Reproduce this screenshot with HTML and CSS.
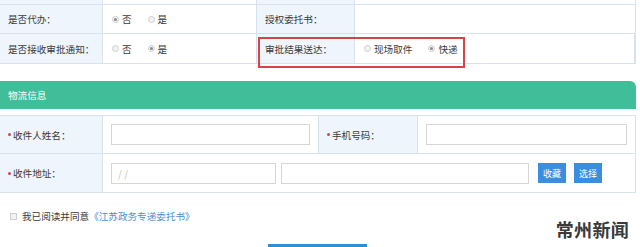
FILE: index.html
```html
<!DOCTYPE html>
<html lang="zh-CN">
<head>
    <meta charset="UTF-8">
    <title>物流信息</title>
    <link rel="stylesheet" href="styles.css">
</head>
<body>
    <div class="form-table top-table">
        <div class="row row-cut">
            <div class="cell label"></div>
            <div class="cell"></div>
            <div class="cell label"></div>
            <div class="cell"></div>
        </div>
        <div class="row">
            <div class="cell label">是否代办：</div>
            <div class="cell radios">
                <label><i class="radio on"></i>否</label>
                <label><i class="radio"></i>是</label>
            </div>
            <div class="cell label">授权委托书：</div>
            <div class="cell"></div>
        </div>
        <div class="row marked">
            <div class="cell label">是否接收审批通知：</div>
            <div class="cell radios">
                <label><i class="radio"></i>否</label>
                <label><i class="radio on"></i>是</label>
            </div>
            <div class="cell label">审批结果送达：</div>
            <div class="cell radios">
                <label><i class="radio"></i>现场取件</label>
                <label><i class="radio on"></i>快递</label>
            </div>
            <!-- 红框标注 -->
            <div class="mark-box"></div>
        </div>
    </div>

    <div class="section-title">物流信息</div>

    <div class="form-table ship-table">
        <div class="row">
            <div class="cell label"><em></em>收件人姓名：</div>
            <div class="cell"><input class="ipt ipt-name" type="text"></div>
            <div class="cell label"><em></em>手机号码：</div>
            <div class="cell"><input class="ipt ipt-phone" type="text"></div>
        </div>
        <div class="row">
            <div class="cell label"><em></em>收件地址：</div>
            <div class="cell addr">
                <input class="ipt ipt-area" type="text" placeholder="/ /">
                <input class="ipt ipt-detail" type="text">
                <button class="btn">收藏</button>
                <button class="btn">选择</button>
            </div>
        </div>
    </div>

    <div class="agree">
        <i class="check"></i>
        <span>我已阅读并同意</span><a>《江苏政务专递委托书》</a>
    </div>

    <div class="submit"></div>

    <!-- 水印 -->
    <div class="watermark">常州新闻</div>
</body>
</html>
```

FILE: styles.css
```css
*,*::before,*::after{
    padding: 0;
    margin: 0;
    box-sizing: border-box;
}
body{
    width: 640px;
    height: 247px;
    overflow: hidden;
    position: relative;
    background: #fff;
    color: #3a3a3a;
    font-family: "Noto Sans CJK SC", "Liberation Sans", sans-serif;
    font-size: 9.6px;
}
a{
    color: #4a8fd6;
    cursor: pointer;
}

.form-table{
    width: 636px;
    border-right: 1px solid #d8e2ec;
}
.row{
    display: grid;
    height: 30px;
    border-bottom: 1px solid #d8e2ec;
}
.top-table .row{
    grid-template-columns: 103px 154px 98px 1fr;
}
.top-table .row-cut{
    height: 5px;
}
.top-table .row:nth-child(2){
    height: 29px;
}
.top-table .row.marked{
    position: relative;
}
.cell{
    display: flex;
    align-items: center;
    padding-left: 8px;
    border-right: 1px solid #d8e2ec;
}
.cell:last-child{
    border-right: none;
}
.cell.label{
    background: #eef5fc;
    white-space: nowrap;
}

.radios{
    gap: 16px;
}
.radios label{
    display: flex;
    align-items: center;
    gap: 3px;
}
.radio{
    width: 7px;
    height: 7px;
    border-radius: 50%;
    border: 1px solid #cfcfcf;
    background: #f2f2f2;
    position: relative;
}
.radio.on::after{
    content: '';
    position: absolute;
    left: 1px;
    top: 1px;
    width: 3px;
    height: 3px;
    border-radius: 50%;
    background: #8a8a8a;
}
.top-table .radios{
    padding-left: 9px;
}

.mark-box{
    position: absolute;
    left: 258px;
    top: 3px;
    width: 207px;
    height: 31px;
    border: 2px solid #d8434a;
}

.section-title{
    width: 636px;
    height: 28px;
    margin-top: 17px;
    margin-bottom: 6px;
    padding-left: 8px;
    line-height: 28px;
    color: #fff;
    background: #3fbe99;
    border-radius: 0 6px 0 0;
}

.ship-table{
    border-top: 1px solid #d8e2ec;
}
.ship-table .row{
    height: 38px;
    grid-template-columns: 103px 216px 99px 1fr;
}
.ship-table .row:last-child{
    height: 39px;
    grid-template-columns: 103px 1fr;
}
.label em{
    width: 3px;
    height: 3px;
    border-radius: 50%;
    background: #d8434a;
    margin-right: 2px;
}
.ipt{
    height: 21px;
    border: 1px solid #d6d6d6;
    background: #fff;
    outline: none;
    padding: 0 6px;
    font-family: inherit;
    font-size: 10px;
    color: #333;
}
.ipt::placeholder{
    color: #c4c4c4;
}
.ipt-name{
    width: 199px;
}
.ipt-phone{
    width: 201px;
}
.addr{
    gap: 5px;
}
.ipt-area{
    width: 165px;
}
.ipt-detail{
    width: 248px;
    margin-right: 4px;
}
.btn{
    height: 20px;
    width: 28px;
    border: none;
    background: #3a8edf;
    color: #fff;
    font-family: inherit;
    font-size: 9px;
    margin-right: 3px;
}

.agree{
    display: flex;
    align-items: center;
    height: 20px;
    margin-top: 13px;
    padding-left: 10px;
}
.check{
    width: 7px;
    height: 7px;
    border: 1px solid #cfcfcf;
    background: #f2f2f2;
    margin-right: 5px;
}

/* 提交按钮，截图只露出顶部 */
.submit{
    width: 99px;
    height: 4px;
    margin-top: 18px;
    margin-left: 268px;
    background: #2b8fd8;
}

.watermark{
    position: absolute;
    right: 11px;
    top: 218px;
    font-size: 18px;
    font-weight: 700;
    line-height: 1.3;
    color: #3a3a3a;
    letter-spacing: 0.3px;
}
```
